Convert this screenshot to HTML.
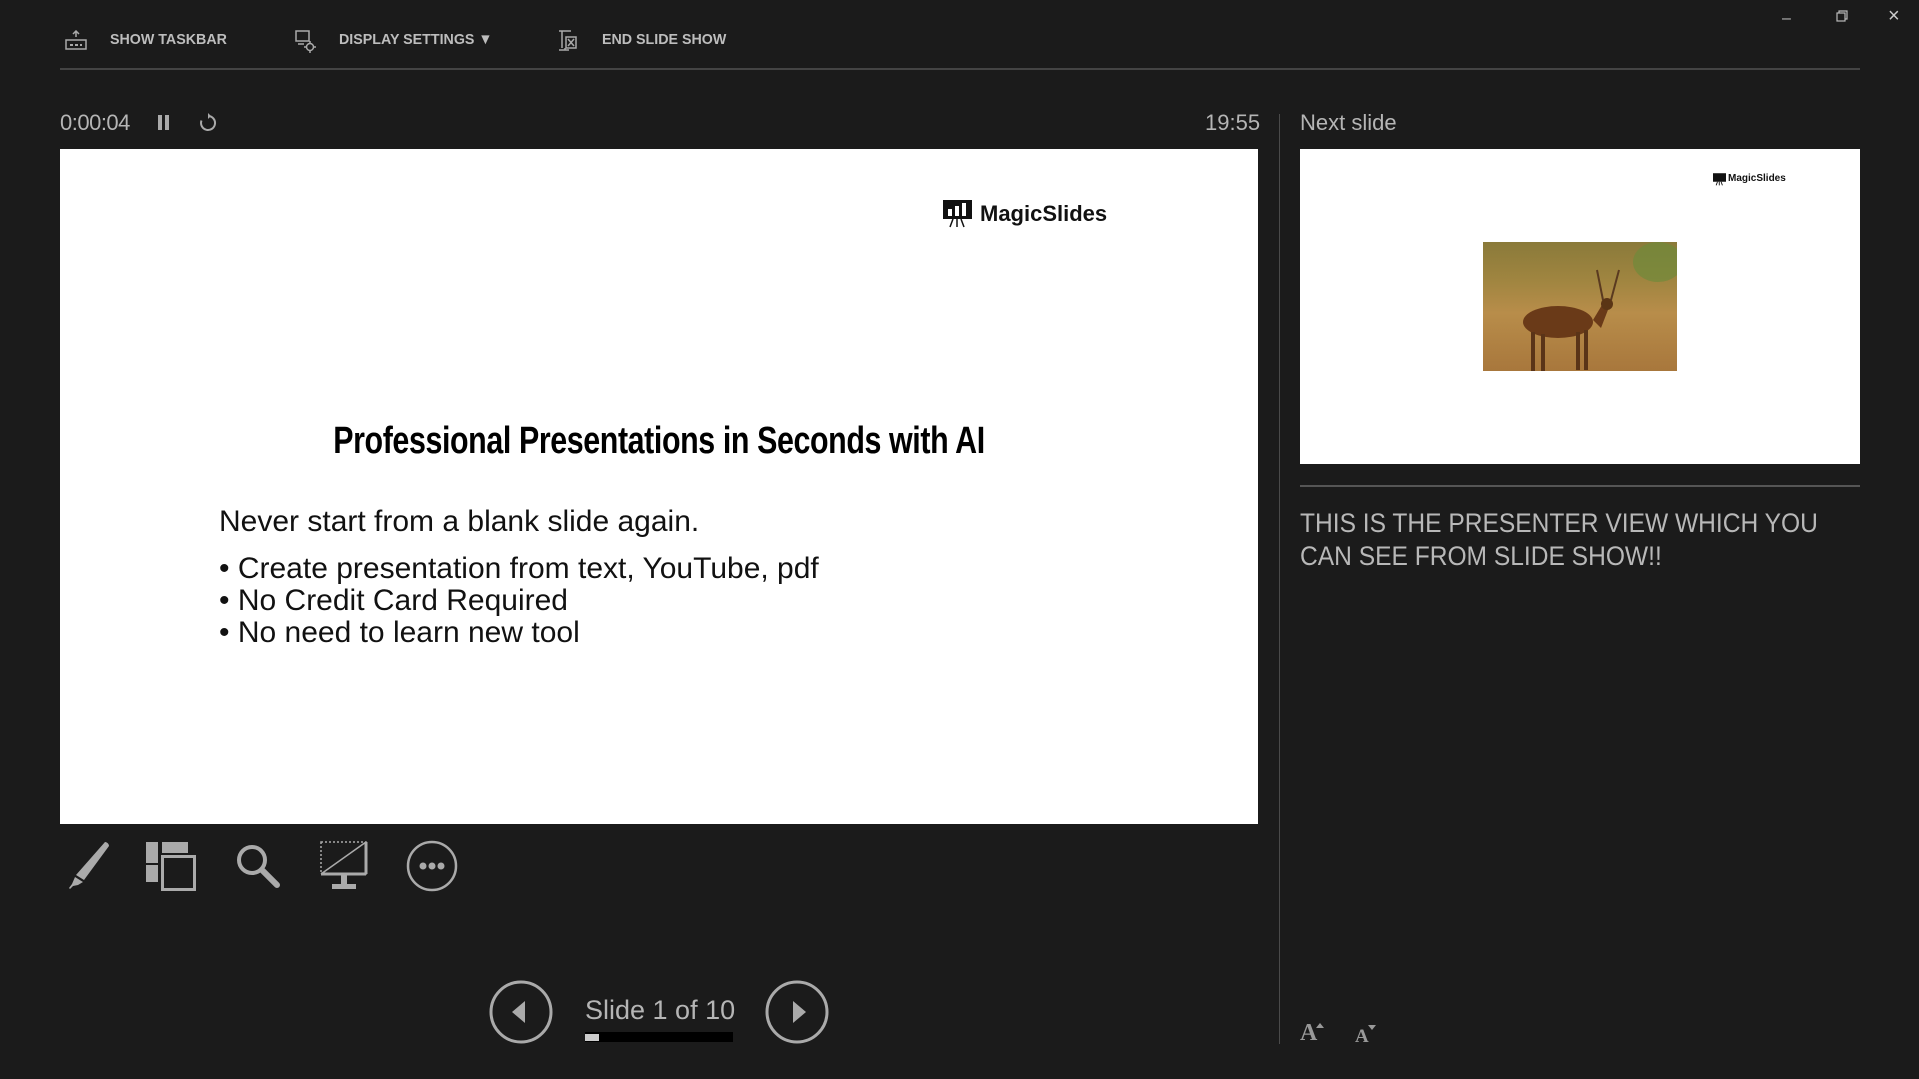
<!DOCTYPE html>
<html><head><meta charset="utf-8"><style>
*{margin:0;padding:0;box-sizing:border-box}
body{width:1919px;height:1079px;background:#1b1b1b;position:relative;overflow:hidden;font-family:"Liberation Sans",sans-serif;color:#bcbcbc}
.a{position:absolute;white-space:nowrap}
.tb{font-size:15px;font-weight:bold;color:#bdbdbd;top:31px;transform:scaleX(.95);transform-origin:left}
</style></head><body>
<svg class="a" style="left:64px;top:30px" width="24" height="22" viewBox="0 0 24 22" fill="none" stroke="#aaa" stroke-width="1.5"><path d="M12 1v6M9 4l3-3 3 3"/><rect x="2" y="10" width="20" height="9"/><path d="M6 15h3M11 15h3M16 15h2" stroke-width="2"/></svg>
<div class="a tb" style="left:110px">SHOW TASKBAR</div>
<svg class="a" style="left:294px;top:29px" width="24" height="24" viewBox="0 0 24 24" fill="none" stroke="#aaa" stroke-width="1.5"><rect x="2" y="2" width="13" height="10"/><path d="M4 15h6"/><circle cx="16" cy="18" r="3.5"/><path d="M16 12v2M16 22v2M10 18h2M20 18h2"/></svg>
<div class="a tb" style="left:339px">DISPLAY SETTINGS ▼</div>
<svg class="a" style="left:558px;top:29px" width="22" height="24" viewBox="0 0 22 24" fill="none" stroke="#aaa" stroke-width="1.5"><path d="M1 2h12M4 2v17M1 21h10M7 19v2"/><rect x="8" y="8" width="10" height="11"/><path d="M10 10l6 7M16 10l-6 7"/></svg>
<div class="a tb" style="left:602px">END SLIDE SHOW</div>
<div class="a" style="left:1782px;top:10px;color:#bbb;font-size:16px">&#8211;</div>
<svg class="a" style="left:1836px;top:10px" width="12" height="12" viewBox="0 0 12 12" fill="none" stroke="#bbb" stroke-width="1.2"><rect x="1" y="3" width="8" height="8"/><path d="M3 3V1h8v8H9"/></svg>
<div class="a" style="left:1888px;top:5px;color:#ccc;font-size:20px">×</div>
<div class="a" style="left:60px;top:68px;width:1800px;height:2px;background:#444"></div>
<div class="a" style="left:60px;top:110px;font-size:22px;color:#b5b5b5;letter-spacing:-0.5px">0:00:04</div>
<div class="a" style="left:158px;top:115px;width:4px;height:15px;background:#aaa"></div>
<div class="a" style="left:165px;top:115px;width:4px;height:15px;background:#aaa"></div>
<svg class="a" style="left:199px;top:113px" width="18" height="19" viewBox="0 0 18 19" fill="none" stroke="#aaa" stroke-width="2"><path d="M9 3a7 7 0 1 1-6.5 4.5"/><path d="M9 0v6l3-3z" fill="#aaa" stroke="none"/></svg>
<div class="a" style="left:1205px;top:110px;font-size:22px;color:#b5b5b5">19:55</div>
<div class="a" style="left:60px;top:149px;width:1198px;height:675px;background:#fff">
  <svg class="a" style="left:883px;top:51px" width="29" height="28" viewBox="0 0 29 28"><rect x="0" y="0" width="29" height="19" fill="#111"/><rect x="5" y="9" width="4" height="7" fill="#fff"/><rect x="12" y="6" width="4" height="10" fill="#fff"/><rect x="19" y="3" width="4" height="13" fill="#fff"/><path d="M14 19v8M10 19l-3 8M18 19l3 8" stroke="#111" stroke-width="1.5"/></svg>
  <div class="a" style="left:920px;top:52px;font-size:22px;font-weight:bold;color:#111">MagicSlides</div>
  <div class="a" style="left:0;width:1198px;top:271px;text-align:center;font-size:38px;font-weight:bold;color:#000;transform:scaleX(.80);transform-origin:center;letter-spacing:-0.5px">Professional Presentations in Seconds with AI</div>
  <div class="a" style="left:159px;top:356px;font-size:30px;color:#111">Never start from a blank slide again.</div>
  <div class="a" style="left:159px;top:404px;font-size:30px;color:#111;line-height:32px">• Create presentation from text, YouTube, pdf<br>• No Credit Card Required<br>• No need to learn new tool</div>
</div>
<div class="a" style="left:1279px;top:114px;width:1px;height:930px;background:#4a4a4a"></div>
<div class="a" style="left:1300px;top:110px;font-size:22px;color:#b5b5b5">Next slide</div>
<div class="a" style="left:1300px;top:149px;width:560px;height:315px;background:#fff">
  <svg class="a" style="left:413px;top:24px" width="13" height="13" viewBox="0 0 29 28"><rect width="29" height="19" fill="#111"/><path d="M14 19v8M10 19l-3 8M18 19l3 8" stroke="#111" stroke-width="2"/></svg>
  <div class="a" style="left:428px;top:24px;font-size:10px;font-weight:bold;color:#111">MagicSlides</div>
  <div class="a" style="left:183px;top:93px;width:194px;height:129px;background:linear-gradient(180deg,#8a7a3a 0%,#a08540 30%,#b88d4a 55%,#a8773c 100%)">
    <svg width="194" height="129" viewBox="0 0 194 129"><ellipse cx="175" cy="20" rx="25" ry="20" fill="#6f8a3a" opacity=".7"/><ellipse cx="75" cy="80" rx="35" ry="16" fill="#6a3a18"/><path d="M110 78l12-20 6 2-10 26z" fill="#6a3a18"/><circle cx="124" cy="62" r="6" fill="#5a3515"/><path d="M120 58l-6-30M128 58l8-30" stroke="#5a3a20" stroke-width="2"/><path d="M50 90v40M60 92v38M95 90v38M103 88v40" stroke="#5a3418" stroke-width="4"/></svg>
  </div>
</div>
<div class="a" style="left:1300px;top:485px;width:560px;height:2px;background:#555"></div>
<div class="a" style="left:1300px;top:507px;font-size:27px;line-height:33px;color:#b8b8b8;transform:scaleX(.91);transform-origin:left">THIS IS THE PRESENTER VIEW WHICH YOU<br>CAN SEE FROM SLIDE SHOW!!</div>
<svg class="a" style="left:62px;top:840px" width="50" height="50" viewBox="0 0 50 50"><path d="M43 2c2 0 4 2 4 4L22 40l-8-5z" fill="#aaa"/><path d="M13 37l8 5-5 3-5 1-3 3-1-1 3-4z" fill="#aaa"/></svg>
<svg class="a" style="left:146px;top:842px" width="52" height="50" viewBox="0 0 52 50"><rect x="0" y="0" width="12" height="21" fill="#aaa"/><rect x="0" y="23" width="12" height="17" fill="#aaa"/><rect x="16" y="0" width="26" height="11" fill="#aaa"/><rect x="16.5" y="14.5" width="32" height="33" fill="none" stroke="#aaa" stroke-width="3"/></svg>
<svg class="a" style="left:234px;top:842px" width="50" height="50" viewBox="0 0 50 50"><circle cx="18" cy="18" r="13" fill="none" stroke="#aaa" stroke-width="4"/><path d="M28 28l15 15" stroke="#aaa" stroke-width="6" stroke-linecap="round"/></svg>
<svg class="a" style="left:320px;top:840px" width="50" height="52" viewBox="0 0 50 52"><rect x="1" y="2" width="45" height="32" fill="none" stroke="#aaa" stroke-width="1.5" stroke-dasharray="2 2"/><path d="M46 2v32M1 34h45" stroke="#aaa" stroke-width="3"/><path d="M1 34L46 2" stroke="#aaa" stroke-width="1.5"/><rect x="21" y="34" width="6" height="10" fill="#aaa"/><rect x="12" y="44" width="24" height="5" fill="#aaa"/></svg>
<svg class="a" style="left:406px;top:840px" width="52" height="52" viewBox="0 0 52 52"><circle cx="26" cy="26" r="24" fill="none" stroke="#aaa" stroke-width="2.5"/><circle cx="17" cy="26" r="3.5" fill="#aaa"/><circle cx="26" cy="26" r="3.5" fill="#aaa"/><circle cx="35" cy="26" r="3.5" fill="#aaa"/></svg>
<svg class="a" style="left:488px;top:979px" width="66" height="66" viewBox="0 0 66 66"><circle cx="33" cy="33" r="30" fill="none" stroke="#aaa" stroke-width="3"/><path d="M37 22v22l-13-11z" fill="#aaa"/></svg>
<div class="a" style="left:585px;top:995px;font-size:27px;color:#b5b5b5">Slide 1 of 10</div>
<div class="a" style="left:585px;top:1032px;width:148px;height:10px;background:#000"></div>
<div class="a" style="left:585px;top:1034px;width:14px;height:7px;background:#ccc"></div>
<svg class="a" style="left:764px;top:979px" width="66" height="66" viewBox="0 0 66 66"><circle cx="33" cy="33" r="30" fill="none" stroke="#aaa" stroke-width="3"/><path d="M29 22v22l13-11z" fill="#aaa"/></svg>
<div class="a" style="left:1300px;top:1020px;font-family:'Liberation Serif',serif;font-weight:bold;font-size:24px;color:#999">A</div>
<div class="a" style="left:1316px;top:1023px;width:0;height:0;border-left:4px solid transparent;border-right:4px solid transparent;border-bottom:5px solid #999"></div>
<div class="a" style="left:1355px;top:1026px;font-family:'Liberation Serif',serif;font-weight:bold;font-size:19px;color:#999">A</div>
<div class="a" style="left:1368px;top:1025px;width:0;height:0;border-left:4px solid transparent;border-right:4px solid transparent;border-top:5px solid #999"></div>
</body></html>
